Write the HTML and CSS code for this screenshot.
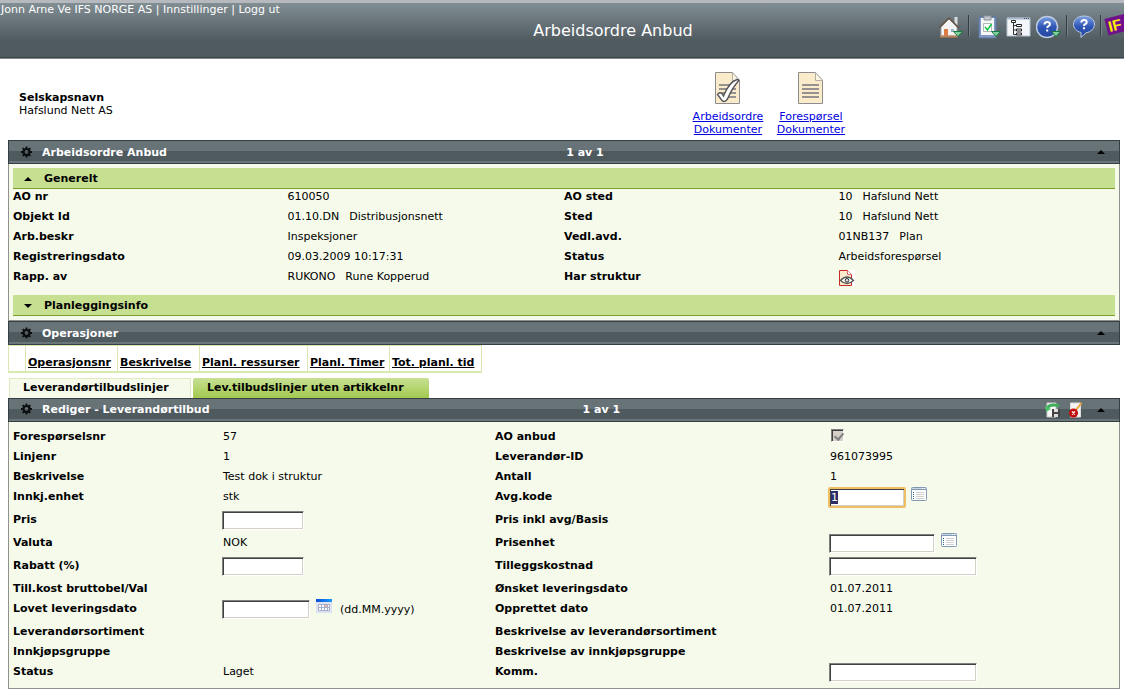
FILE: index.html
```html
<!DOCTYPE html>
<html lang="no">
<head>
<meta charset="utf-8">
<title>Arbeidsordre Anbud</title>
<link rel="stylesheet" href="styles.css">
</head>
<body>
<svg class="defs" aria-hidden="true">
  <defs>
    <linearGradient id="blue" x1="0" y1="0" x2="0" y2="1"><stop offset="0" stop-color="#7fa0e6"/><stop offset=".5" stop-color="#2f56b4"/><stop offset="1" stop-color="#2547a0"/></linearGradient>
    <linearGradient id="cal" x1="0" y1="0" x2="1" y2="0"><stop offset="0" stop-color="#0a50d8"/><stop offset="1" stop-color="#1a9cff"/></linearGradient>
    <symbol id="gear" viewBox="0 0 12 12"><circle cx="6" cy="6" r="3.3" fill="none" stroke="#0a0c0d" stroke-width="2.4"/><path d="M6 0v2M6 10v2M0 6h2M10 6h2M1.800 1.800l1.400 1.400M8.800 8.800l1.400 1.400M1.800 10.200l1.400-1.400M8.800 3.200l1.400-1.400" stroke="#0a0c0d" stroke-width="2"/></symbol>
    <symbol id="up" viewBox="0 0 8 4"><path d="M4 0L8 4H0z" fill="#000"/></symbol>
    <symbol id="down" viewBox="0 0 8 4"><path d="M4 4L8 0H0z" fill="#000"/></symbol>
    <symbol id="drop" viewBox="0 0 10 6"><path d="M.5 .5h9L5 5.500z" fill="#7fd09a" stroke="#187a43"/></symbol>
    <symbol id="list" viewBox="0 0 16 14"><rect x=".5" y=".5" width="15" height="13" rx="1" fill="#fff" stroke="#8199b3"/><path d="M1 1.500h14" stroke="#c9d6e4"/><path d="M1 2.500h14" stroke="#8199b3"/><path d="M11 1.500h1M13 1.500h1" stroke="#fff"/><path d="M5 5.500h8M5 7.500h8M5 9.500h8M5 11.500h8" stroke="#d0d0d0"/><path d="M2.500 5v8" stroke="#1c6b8c" stroke-dasharray="1"/></symbol>
    <symbol id="page" viewBox="0 0 26 32"><path d="M.5 .5h17l7 8v23H.5z" fill="#faebcb" stroke="#8d8d91"/><path d="M17.500 .5v8h7z" fill="#fbf7e4" stroke="#b2aea4"/><path d="M4 13h17M4 17h17M4 21h17M4 25h17" stroke="#97918f" stroke-width="2"/></symbol>
  </defs>
</svg>

<header class="header">
  <nav class="user"><span>Jonn Arne Ve IFS NORGE AS</span> | <a href="#">Innstillinger</a> | <a href="#">Logg ut</a></nav>
  <h1 class="title">Arbeidsordre Anbud</h1>
  <div class="toolbar">
    <button class="tool" aria-label="Hjem"><svg width="26" height="24" viewBox="0 0 26 24"><path d="M16.500 2h3v8h-3z" fill="#d9dde0"/><path d="M3 12l8-8 8 8v9H3z" fill="#f4f4f4" stroke="#a0a4a6"/><path d="M1 13L11 3l10 10" fill="none" stroke="#655446" stroke-width="1.500"/><path d="M6 14h4v7H6z" fill="#dd7c46"/><path d="M13 14h3v3h-3z" fill="#97b5c4"/><path d="M2 21.500h18" stroke="#c08459" stroke-width="2"/><use href="#drop" x="15" y="16" width="10" height="6"/></svg></button>
    <i class="divider"></i>
    <button class="tool tool-first" aria-label="Oppgaver"><svg width="24" height="24" viewBox="0 0 24 24"><path d="M1 2h17v21H1z" fill="#8199c3" stroke="#5c76a2"/><path d="M3 3h13v17H3z" fill="#f5f7f9"/><path d="M6 1h7v4H6z" fill="#c1c7cc" stroke="#8c949a"/><path d="M5.500 8.500h8v8h-8z" fill="#fff" stroke="#b0b8b5"/><path d="M7 12l2.500 3 4-6" fill="none" stroke="#00c83c" stroke-width="1.400"/><use href="#drop" x="13" y="16" width="10" height="6"/></svg></button>
    <button class="tool" aria-label="Navigator"><svg width="26" height="24" viewBox="0 0 26 24"><path d="M1 3h23v18H1z" fill="#f3f6f9" stroke="#b5c2cd"/><path d="M1 3.500h23" stroke="#a8b9cc" stroke-width="2"/><path d="M18 3.500h5" stroke="#34475a" stroke-dasharray="1"/><path d="M7.500 8v11.500H11M7.500 10.500H11M7.500 15H11" fill="none" stroke="#333"/><path d="M5.500 5.500h4v2h-4zM10.500 9.500h5v2h-5zM10.500 14h5v2h-5zM10.500 18h5v2h-5z" fill="#fff" stroke="#222"/></svg></button>
    <button class="tool" aria-label="Hjelp"><svg width="26" height="24" viewBox="0 0 26 24"><circle cx="11" cy="12" r="10.500" fill="url(#blue)" stroke="#bccbe0" stroke-width="1.500"/><path d="M8.500 9.500q0-2.500 2.700-2.500t2.700 2.200q0 1.300-1.500 2-1.200.7-1.200 1.800" fill="none" stroke="#fff" stroke-width="2"/><path d="M10.200 14.500h2v2h-2z" fill="#fff"/><use href="#drop" x="15" y="16" width="10" height="6"/></svg></button>
    <i class="divider"></i>
    <button class="tool" aria-label="Om"><svg width="24" height="24" viewBox="0 0 24 24"><path d="M12 1c6 0 10.500 3.500 10.500 8S19 17 14 17.800L9 22.500V17.500C4.500 16.500 1.500 13 1.500 9.500 1.500 4.500 6 1 12 1z" fill="url(#blue)" stroke="#b9c9e2"/><path d="M9.300 7.500q0-2.500 2.700-2.500t2.700 2.200q0 1.300-1.500 2-1.200.6-1.200 1.800" fill="none" stroke="#fff" stroke-width="2"/><path d="M11 12.200h2v2h-2z" fill="#fff"/></svg></button>
    <i class="divider"></i>
    <a class="logo" href="#">IF</a>
  </div>
</header>

<div class="intro">
  <div class="company"><b>Selskapsnavn</b><br>Hafslund Nett AS</div>
  <a class="doc" href="#"><svg width="26" height="32" viewBox="0 0 26 32"><use href="#page"/><path d="M2.500 22.500q3-4 6 1.500Q14 10 22 7.500q3 .5 1.500 1.500Q17 16 12.500 27q-3 4-5.500 1.500z" fill="#fff" stroke="#55555a" stroke-width="1.400"/></svg>Arbeidsordre<br>Dokumenter</a>
  <a class="doc" href="#"><svg width="26" height="32"><use href="#page"/></svg>Forespørsel<br>Dokumenter</a>
</div>

<main class="content">
  <section>
    <div class="bar">
      <svg class="gear"><use href="#gear"/></svg>
      <h2>Arbeidsordre Anbud</h2>
      <span class="counter">1 av 1</span>
      <div class="actions"><button class="toggle" aria-label="Skjul"><svg width="8" height="4"><use href="#up"/></svg></button></div>
    </div>
    <div class="panel general">
      <h3 class="group"><svg width="8" height="4"><use href="#up"/></svg>Generelt</h3>
      <dl class="facts">
        <dt>AO nr</dt><dd>610050</dd><dt>AO sted</dt><dd>10<span>Hafslund Nett</span></dd>
        <dt>Objekt Id</dt><dd>01.10.DN<span>Distribusjonsnett</span></dd><dt>Sted</dt><dd>10<span>Hafslund Nett</span></dd>
        <dt>Arb.beskr</dt><dd>Inspeksjoner</dd><dt>Vedl.avd.</dt><dd>01NB137<span>Plan</span></dd>
        <dt>Registreringsdato</dt><dd>09.03.2009 10:17:31</dd><dt>Status</dt><dd>Arbeidsforespørsel</dd>
        <dt>Rapp. av</dt><dd>RUKONO<span>Rune Kopperud</span></dd><dt>Har struktur</dt>
        <dd><svg width="16" height="16" viewBox="0 0 16 16"><path d="M0 0h16v16H0z" fill="#fff"/><path d="M.5 .5h8l4 4v11H.5z" fill="#faeccb" stroke="#cc2a2a"/><path d="M8.500 .5v4h4" fill="#fff" stroke="#dc6868"/><path d="M1.500 10.500q6.500-7 13 0-6.500 6-13 0z" fill="#fff" stroke="#555" stroke-width="1.300"/><circle cx="8" cy="10.300" r="1.800" fill="#ddd" stroke="#333"/></svg></dd>
      </dl>
      <h3 class="group"><svg width="8" height="4"><use href="#down"/></svg>Planleggingsinfo</h3>
    </div>
  </section>

  <section>
    <div class="bar">
      <svg class="gear"><use href="#gear"/></svg>
      <h2>Operasjoner</h2>
      <div class="actions"><button class="toggle" aria-label="Skjul"><svg width="8" height="4"><use href="#up"/></svg></button></div>
    </div>
    <table class="operations">
      <colgroup><col class="c-mark"><col class="c-wide"><col class="c-slim"><col class="c-widest"><col class="c-slim"><col class="c-wide"></colgroup>
      <tr><td></td><th><a href="#">Operasjonsnr</a></th><th><a href="#">Beskrivelse</a></th><th><a href="#">Planl. ressurser</a></th><th><a href="#">Planl. Timer</a></th><th><a href="#">Tot. planl. tid</a></th></tr>
    </table>
  </section>

  <div class="tabs">
    <button class="tab">Leverandørtilbudslinjer</button>
    <button class="tab active">Lev.tilbudslinjer uten artikkelnr</button>
  </div>

  <section>
    <div class="bar">
      <svg class="gear"><use href="#gear"/></svg>
      <h2>Rediger - Leverandørtilbud</h2>
      <span class="counter">1 av 1</span>
      <div class="actions wide">
        <button class="toggle" aria-label="Lagre"><svg width="16" height="16" viewBox="0 0 16 16"><path d="M2 1h9v14H2z" fill="#f7f7f7" stroke="#ccc"/><path d="M7 7h8v8H7z" fill="#444"/><path d="M9 7h4v3H9zM9 12h4v3H9z" fill="#ddd"/><path d="M2 6q4-4.500 12-2" fill="none" stroke="#3fae5b" stroke-width="3"/><path d="M0 4l1 6 5-3z" fill="#4cc06a"/></svg></button>
        <button class="toggle" aria-label="Avbryt"><svg width="14" height="16" viewBox="0 0 14 16"><path d="M1.500 1h10v14h-10z" fill="#f4f4f4" stroke="#ddd"/><path d="M12.500 1L7 8" stroke="#f0a43a" stroke-width="2"/><circle cx="4.500" cy="11" r="4.500" fill="#c00c0c"/><path d="M3 9.500l3 3M6 9.500l-3 3" stroke="#fff" stroke-width="1.400"/></svg></button>
        <button class="toggle" aria-label="Skjul"><svg width="8" height="4"><use href="#up"/></svg></button>
      </div>
    </div>
    <form class="panel edit">
      <div class="row"><b>Forespørselsnr</b><span>57</span><label for="ao">AO anbud</label><span class="field"><input id="ao" class="check" type="checkbox" checked disabled></span></div>
      <div class="row"><b>Linjenr</b><span>1</span><b>Leverandør-ID</b><span>961073995</span></div>
      <div class="row"><b>Beskrivelse</b><span>Test dok i struktur</span><b>Antall</b><span>1</span></div>
      <div class="row tall"><b>Innkj.enhet</b><span>stk</span><label for="avg">Avg.kode</label><span class="field"><input id="avg" class="box w-code" value="1"><button type="button" class="pick" aria-label="Velg avgiftskode"><svg width="16" height="14"><use href="#list"/></svg></button></span></div>
      <div class="row tall"><label for="pris">Pris</label><span class="field"><input id="pris" class="box w-small"></span><b>Pris inkl avg/Basis</b></div>
      <div class="row tall"><b>Valuta</b><span>NOK</span><label for="enhet">Prisenhet</label><span class="field"><input id="enhet" class="box w-medium"><button type="button" class="pick" aria-label="Velg prisenhet"><svg width="16" height="14"><use href="#list"/></svg></button></span></div>
      <div class="row tall"><label for="rabatt">Rabatt (%)</label><span class="field"><input id="rabatt" class="box w-small"></span><label for="tillegg">Tilleggskostnad</label><span class="field"><input id="tillegg" class="box w-large"></span></div>
      <div class="row"><b>Till.kost bruttobel/Val</b><span></span><b>Ønsket leveringsdato</b><span>01.07.2011</span></div>
      <div class="row tall"><label for="lovet">Lovet leveringsdato</label><span class="field"><input id="lovet" class="box w-date"><button type="button" class="pick" aria-label="Velg dato"><svg width="16" height="14" viewBox="0 0 16 14"><path d="M0 0h16v14H0z" fill="#dde2ee"/><path d="M0 0h16v3H0z" fill="url(#cal)"/><path d="M2.500 5.500h11v6h-11zM2.500 8.500h11M5.500 5.500v6M8.500 5.500v6M11.500 5.500v6" fill="#fff" stroke="#a5b0d0"/><path d="M9 6h2v2H9z" fill="#f2b191"/></svg></button><span class="hint">(dd.MM.yyyy)</span></span><b>Opprettet dato</b><span>01.07.2011</span></div>
      <div class="row"><b>Leverandørsortiment</b><span></span><b>Beskrivelse av leverandørsortiment</b></div>
      <div class="row"><b>Innkjøpsgruppe</b><span></span><b>Beskrivelse av innkjøpsgruppe</b></div>
      <div class="row tall"><b>Status</b><span>Laget</span><label for="komm">Komm.</label><span class="field"><input id="komm" class="box w-large"></span></div>
    </form>
  </section>
</main>
<script src="script.js"></script>
</body>
</html>
```
FILE: styles.css
```css
* { box-sizing: border-box; }
body { margin: 0; background: #fff; color: #000; font: 11px/14px "DejaVu Sans", Verdana, sans-serif; overflow-x: hidden; }
h1, h2, h3, dl, dd { margin: 0; font-size: 11px; }
button { margin: 0; padding: 0; border: 0; background: none; font: inherit; color: inherit; cursor: pointer; }
svg { display: block; flex: none; }
::selection { background: #2b2f66; color: #fff; }
.defs { position: absolute; width: 0; height: 0; }

.header { display: flex; height: 59px; color: #fff; border-top: 3px solid #b6babf; border-bottom: 1px solid #808c92; background: linear-gradient(#818e94, #4f5a5f 38px, #4f5a5f 54px, #3c454a 54px); overflow: hidden; }
.user { flex: none; width: 290px; padding: 0 1px; white-space: nowrap; }
.user a { color: inherit; text-decoration: none; }
.title { flex: 1; padding-top: 18px; font-size: 16px; line-height: 20px; font-weight: normal; text-align: center; }
.toolbar { display: flex; flex: none; width: 188px; padding: 12px 0 0 2px; }
.tool { flex: none; height: 24px; margin-right: 4px; }
.tool-first { margin-left: 4px; }
.divider { flex: none; width: 2px; height: 21px; margin-right: 4px; border-left: 1px solid #333c41; border-right: 1px solid #77848a; }
.logo { flex: none; width: 30px; height: 17px; padding: 0 2px; background: #70108c; color: #ffef00; font: bold 15px/17px "Liberation Sans", sans-serif; text-decoration: none; transform: rotate(-14deg); }

.intro { display: flex; gap: 10px; padding: 13px 19px 0; height: 81px; line-height: 13px; }
.company { flex: 0 0 61%; padding-top: 19px; }
.doc { flex: none; min-width: 73px; text-align: center; color: #0000e0; }
.doc svg { margin: 0 auto 6px; }

.content { margin: 0 4px 0 8px; }
.bar { display: flex; align-items: center; height: 24px; padding: 0 14px 0 12px; border: 1px solid #353e42; color: #fff; background: linear-gradient(#687378 10px, #4f5a5f 10px, #4f5a5f 20px, #6a757a 20px); }
.gear { width: 11px; height: 12px; margin-bottom: 1px; }
.bar h2 { margin-left: 10px; padding-top: 1px; }
.counter { flex: 1; padding-top: 1px; font-weight: bold; text-align: center; }
.actions { display: flex; align-items: center; justify-content: flex-end; gap: 8px; min-width: 102px; margin-left: auto; }
.actions.wide { min-width: 112px; }
.toggle:last-child { margin-left: 6px; }

.panel { border: 1px solid #8f918c; border-top: 0; background: #f5faeb; }
.general { padding: 4px; }
.group { display: flex; align-items: center; gap: 12px; height: 21px; padding: 1px 0 0 11px; background: #c7df91; border-bottom: 1px solid #799f2d; }
.facts { display: grid; grid-template-columns: repeat(4, 1fr); row-gap: 6px; padding: 1px 0 11px; }
.facts dt { height: 14px; font-weight: bold; }
.facts dd { height: 14px; margin-left: -1px; white-space: nowrap; }
.facts span { margin-left: 10px; }

.operations { border-collapse: collapse; table-layout: fixed; width: 474px; border: 1px solid #d8e8b0; border-bottom-width: 2px; }
.operations td { border: 1px solid #d8e8b0; }
.operations th { height: 26px; padding: 9px 2px 0; border: 1px solid #d8e8b0; text-align: left; white-space: nowrap; }
.operations a { color: #000; }
.c-mark { width: 17px; }
.c-slim { width: 82px; }
.c-wide { width: 92px; }
.c-widest { width: 108px; }

.tabs { display: flex; gap: 2px; margin: 5px 1px 0; }
.tab { min-width: 182px; height: 20px; padding: 0 13px; border: 1px solid #e0ecc0; border-bottom: 0; background: #f5faeb; font-weight: bold; text-align: left; }
.tab.active { min-width: 236px; border-color: transparent; border-radius: 2px 2px 0 0; background: linear-gradient(#c8e094, #a2c94f) border-box; }

.edit { padding: 5px 4px 3px; }
.row { display: grid; grid-template-columns: 210fr 272fr 335fr 285fr; align-items: center; height: 20px; white-space: nowrap; }
.row.tall { height: 23px; padding-bottom: 3px; }
.row label, .row b { font-weight: bold; }
.field { display: flex; align-items: flex-start; height: 20px; margin-left: -1px; }
.box { height: 19px; margin-top: 1px; padding: 0 1px; border: 1px solid; border-color: #808080 #fff #fff #808080; background: #fff; box-shadow: inset 1px 1px #404040, inset -1px -1px #d4d0c8; font: inherit; outline: 0; }
.box:focus { border-radius: 1px; outline: 2px solid #efbd62; outline-offset: -1px; }
.w-code { width: 76px; }
.w-small { width: 82px; }
.w-date { width: 88px; }
.w-medium { width: 106px; }
.w-large { width: 148px; }
.pick { margin-left: 6px; }
.hint { margin: 4px 0 0 8px; }
.check { appearance: none; width: 13px; height: 13px; margin: 2px 0 0 2px; border: 1px solid; border-color: #808080 #fff #fff #808080; background: #d4d0c8; box-shadow: inset 1px 1px #404040; }
.check::before { content: ""; display: block; width: 4px; height: 7px; margin: 1px 0 0 4px; border: solid #808080; border-width: 0 2px 2px 0; transform: rotate(40deg); }
```
FILE: script.js
```js
const code = document.getElementById("avg");
code.focus();
code.select();
```
